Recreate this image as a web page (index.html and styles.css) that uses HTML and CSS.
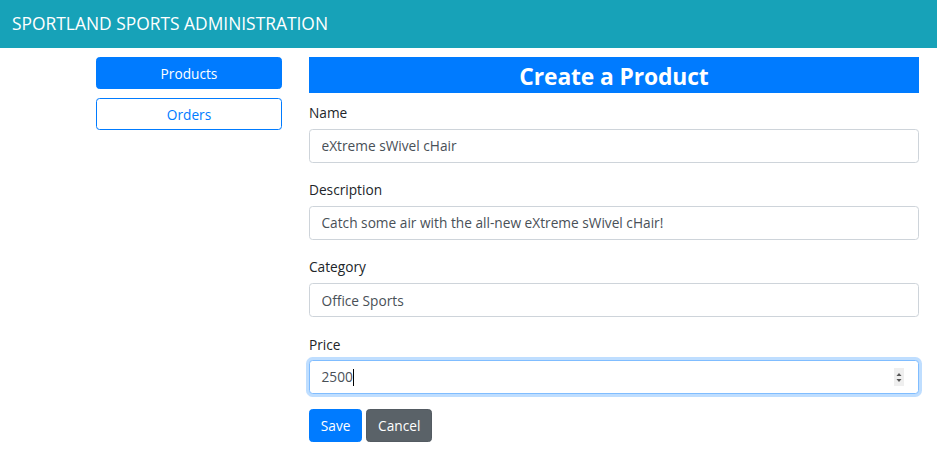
FILE: index.html
```html
<!DOCTYPE html>
<html lang="en">
<head>
<meta charset="utf-8">
<title>SportLand Sports Administration</title>
<link rel="stylesheet" href="styles.css">
</head>
<body>
<header class="navbar">SPORTLAND SPORTS ADMINISTRATION</header>
<div class="main">
  <nav class="sidebar">
    <button class="side-btn side-btn-primary">Products</button>
    <button class="side-btn side-btn-outline">Orders</button>
  </nav>
  <section class="content">
    <h3 class="title">Create a Product</h3>
    <div class="form-group">
      <label class="label">Name</label>
      <input class="field" type="text" value="eXtreme sWivel cHair">
    </div>
    <div class="form-group">
      <label class="label">Description</label>
      <input class="field" type="text" value="Catch some air with the all-new eXtreme sWivel cHair!">
    </div>
    <div class="form-group">
      <label class="label">Category</label>
      <input class="field" type="text" value="Office Sports">
    </div>
    <div class="form-group">
      <label class="label">Price</label>
      <div class="field field-focus">
        <span class="value">2500</span><span class="caret"></span>
        <span class="spinner">
          <svg width="10" height="18" viewBox="0 0 10 18"><path d="M2.5 8 L5 5 L7.5 8 Z" fill="#555"/><path d="M2.5 11 L5 14 L7.5 11 Z" fill="#555"/></svg>
        </span>
      </div>
    </div>
    <div class="actions">
      <button class="btn btn-primary">Save</button>
      <button class="btn btn-secondary">Cancel</button>
    </div>
  </section>
</div>
</body>
</html>
```
FILE: styles.css
```css
* { box-sizing: border-box; }
body {
  margin: 0;
  font-family: "Open Sans", "Noto Sans", sans-serif;
  font-size: 13.7px;
  line-height: 1.5;
  color: #212529;
  background: #fff;
}
.navbar {
  height: 48px;
  background: #17a2b8;
  color: #fff;
  font-size: 17.4px;
  display: flex;
  align-items: center;
  padding-left: 12px;
  padding-bottom: 1px;
}
.main {
  display: flex;
  gap: 27px;
  padding: 9px 18px 0 96px;
}
.sidebar {
  width: 186px;
  display: flex;
  flex-direction: column;
  gap: 9px;
}
.side-btn {
  height: 32px;
  font-family: inherit;
  font-size: 13.7px;
  border-radius: 3.6px;
  border: 1px solid #007bff;
  padding: 0;
}
.side-btn-primary { background: #007bff; color: #fff; }
.side-btn-outline { background: #fff; color: #007bff; }
.content { flex: 1; }
.title {
  margin: 0 0 7px;
  height: 36px;
  padding-top: 2px;
  line-height: 36px;
  background: #007bff;
  color: #fff;
  text-align: center;
  font-size: 22.8px;
  font-weight: 700;
  letter-spacing: -0.1px;
  overflow: hidden;
}
.form-group { margin-bottom: 14.4px; }
.label {
  display: block;
  line-height: 21.6px;
  margin-bottom: 5.2px;
  padding-top: 2px;
}
.field {
  display: block;
  width: 100%;
  height: 34px;
  padding: 0 10.8px 0 11.5px;
  font-family: inherit;
  font-size: 13.7px;
  color: #495057;
  background: #fff;
  border: 1px solid #ced4da;
  border-radius: 3.6px;
  outline: none;
}
.field-focus {
  position: relative;
  display: flex;
  align-items: center;
  border-color: #80bdff;
  box-shadow: 0 0 0 3px rgba(0, 123, 255, 0.25);
}
.caret {
  width: 1px;
  height: 17px;
  background: #000;
}
.spinner {
  position: absolute;
  right: 14px;
  top: 7px;
  width: 10px;
  height: 18px;
  background: #efefef;
  display: flex;
}
.actions { display: flex; gap: 4px; }
.btn {
  height: 33px;
  padding: 0 10.8px;
  font-family: inherit;
  font-size: 13.7px;
  color: #fff;
  border: 1px solid transparent;
  border-radius: 3.6px;
}
.btn-primary { background: #007bff; border-color: #007bff; }
.btn-secondary { background: #5a6268; border-color: #545b62; }
```
